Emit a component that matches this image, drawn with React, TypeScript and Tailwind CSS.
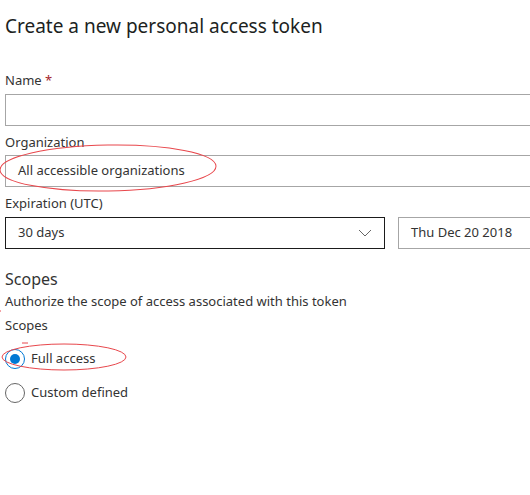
import React from "react";

const font = { fontFamily: '"Segoe UI", "Noto Sans", "Open Sans", sans-serif' };

function Radio({ checked, label }: { checked?: boolean; label: string }) {
  return (
    <div className="flex h-[22px] items-center gap-[6px]">
      <span
        className={
          "flex h-[20px] w-[20px] items-center justify-center rounded-full border " +
          (checked ? "border-[#0078d4]" : "border-[#666666]")
        }
      >
        {checked && <span className="h-[10px] w-[10px] rounded-full bg-[#0078d4]" />}
      </span>
      <span className="text-[13px] text-[#333333]">{label}</span>
    </div>
  );
}

export default function App() {
  return (
    <div className="relative h-[495px] w-[530px] overflow-hidden bg-white" style={font}>
      <div className="w-[600px] pl-[5px] pt-[12px]">
        <h1 className="h-[28px] text-[19px] leading-[28px] text-[#201f1e]">
          Create a new personal access token
        </h1>

        <div className="mt-[30px] h-[20px] text-[13px] leading-[20px] text-[#333333]">
          Name <span className="text-[#a4262c]">*</span>
        </div>
        <div className="mt-[4px] h-[32px] w-[560px] border border-[#a6a6a6]" />

        <div className="mt-[6px] h-[20px] text-[13px] leading-[20px] text-[#333333]">
          Organization
        </div>
        <div className="mt-[3px] flex h-[32px] w-[560px] items-center border border-[#a6a6a6] pl-[12px] text-[13px] text-[#333333]">
          All accessible organizations
        </div>

        <div className="mt-[6px] h-[20px] text-[13px] leading-[20px] text-[#333333]">
          Expiration (UTC)
        </div>
        <div className="mt-[4px] flex gap-[13px]">
          <div className="flex h-[32px] w-[380px] items-center justify-between border border-[#1b1b1b] pl-[12px] pr-[12px] text-[13px] text-[#333333]">
            <span>30 days</span>
            <svg width="14" height="8" viewBox="0 0 14 8" fill="none">
              <path d="M1 1l6 6 6-6" stroke="#666666" strokeWidth="1" />
            </svg>
          </div>
          <div className="flex h-[32px] w-[160px] items-center border border-[#a6a6a6] pl-[12px] text-[13px] text-[#333333]">
            Thu Dec 20 2018
          </div>
        </div>

        <div className="mt-[18px] h-[24px] text-[16px] leading-[24px] text-[#333333]">Scopes</div>
        <div className="h-[20px] text-[13px] leading-[20px] text-[#333333]">
          Authorize the scope of access associated with this token
        </div>
        <div className="mt-[4px] h-[20px] text-[13px] leading-[20px] text-[#333333]">Scopes</div>

        <div className="mt-[13px] flex flex-col gap-[12px]">
          <Radio checked label="Full access" />
          <Radio label="Custom defined" />
        </div>
      </div>

      <svg className="pointer-events-none absolute left-0 top-0" width="530" height="495">
        <ellipse cx="108" cy="168" rx="108" ry="23" transform="rotate(-1 108 168)" fill="none" stroke="#e8474c" strokeWidth="1" />
        <ellipse cx="64" cy="357" rx="62" ry="13" fill="none" stroke="#e8474c" strokeWidth="1" />
        <line x1="0" y1="311" x2="1" y2="311" stroke="#e8474c" strokeWidth="1" />
        <line x1="22" y1="343" x2="28" y2="343" stroke="#e8474c" strokeWidth="1" />
      </svg>
    </div>
  );
}
